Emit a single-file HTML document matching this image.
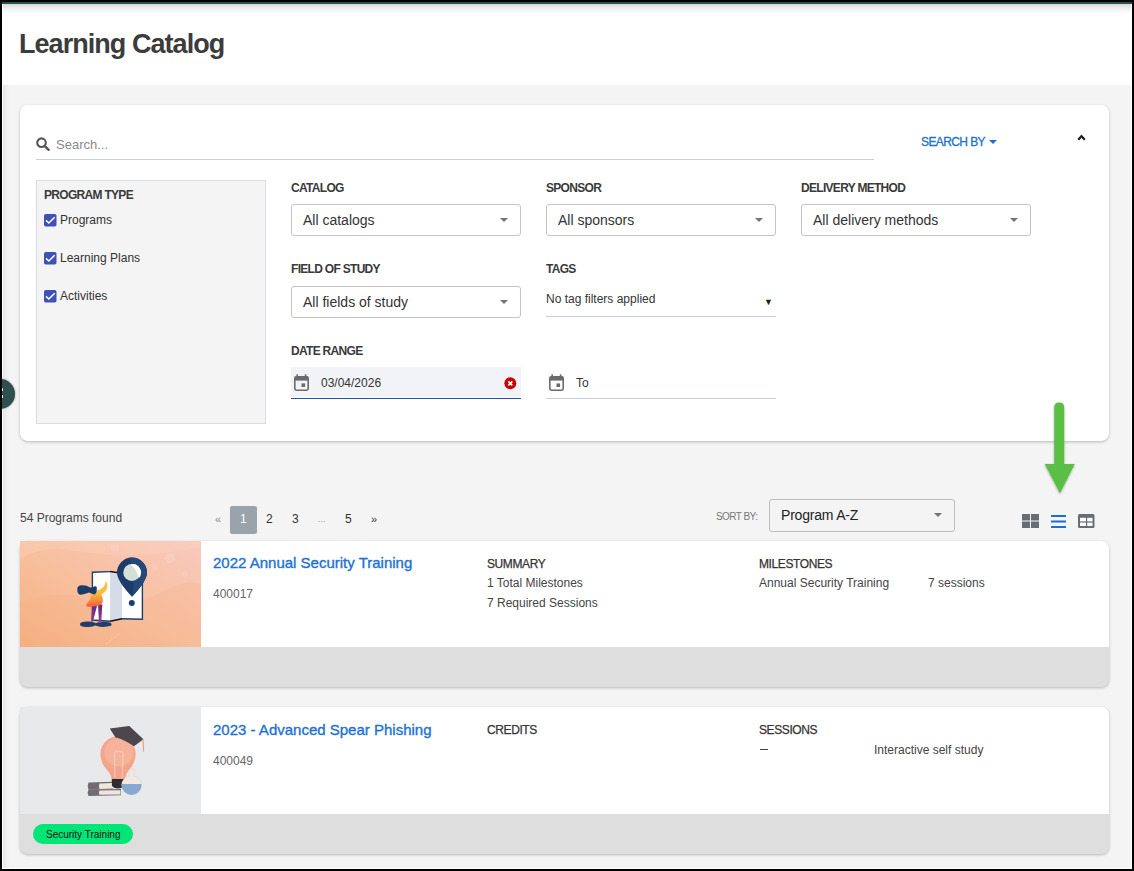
<!DOCTYPE html>
<html><head><meta charset="utf-8">
<style>
*{box-sizing:border-box;margin:0;padding:0}
html,body{width:1134px;height:871px;overflow:hidden;background:#000}
body{font-family:"Liberation Sans",sans-serif;color:#333;position:relative}
.a{position:absolute}
.frame{left:2px;top:2px;width:1130px;height:867px;background:#f4f4f4}
.topline{left:2px;top:2px;width:1130px;height:2px;background:#2a4f4f}
.header{left:2px;top:4px;width:1130px;height:81px;background:#fff}
.shade{left:2px;top:4px;width:1130px;height:10px;background:linear-gradient(#d8d8d8 0%,#ebebeb 35%,#f9f9f9 70%,rgba(255,255,255,0) 100%)}
.title{left:19px;top:29px;font-size:27px;font-weight:bold;color:#3c3c3c;white-space:nowrap;letter-spacing:-0.95px}
.card{background:#fff;border-radius:8px;box-shadow:0 1px 3px rgba(0,0,0,0.25)}
.lbl{font-size:12px;font-weight:bold;color:#3a3a3a;white-space:nowrap;letter-spacing:-0.7px}
.sel{height:32px;border:1px solid #c4c4c4;border-radius:3px;background:#fff;font-size:14px;color:#333;padding:7px 0 0 11px;white-space:nowrap}
.sel .caret{position:absolute;right:11.75px;top:13px;width:0;height:0;border-left:4.25px solid transparent;border-right:4.25px solid transparent;border-top:4.25px solid #757575}
.cb{width:12px;height:12px;background:#3f51b5;border-radius:2px}
.t{white-space:nowrap}
</style></head>
<body>
<div class="a frame"></div>
<div class="a header"></div>
<div class="a shade"></div>
<div class="a topline"></div>
<div class="a title">Learning Catalog</div>

<!-- filter panel -->
<div class="a card" style="left:20px;top:105px;width:1089px;height:336px"></div>

<!-- search -->
<svg class="a" style="left:36px;top:137px" width="14" height="15" viewBox="0 0 14 15"><circle cx="5.5" cy="5.7" r="4.3" fill="none" stroke="#555" stroke-width="2.1"/><path d="M8.6 8.8 L12.6 12.8" stroke="#555" stroke-width="2.4" stroke-linecap="round"/></svg>
<div class="a t" style="left:56px;top:137px;font-size:13px;color:#8a8a8a">Search...</div>
<div class="a" style="left:36px;top:159px;width:838px;height:1px;background:#c8cfd8"></div>
<div class="a t" style="left:921px;top:135px;font-size:12px;color:#1a73c8;letter-spacing:-0.6px;-webkit-text-stroke:0.3px #1a73c8">SEARCH BY</div>
<div class="a" style="left:988.5px;top:140px;width:0;height:0;border-left:4px solid transparent;border-right:4px solid transparent;border-top:4.5px solid #1a73c8"></div>
<svg class="a" style="left:1076px;top:133px" width="11" height="9" viewBox="0 0 11 9"><path d="M2.2 6.8 L5.5 3.3 L8.8 6.8" fill="none" stroke="#222" stroke-width="2.3"/></svg>

<!-- program type -->
<div class="a" style="left:36px;top:180px;width:230px;height:244px;background:#f4f4f4;border:1px solid #d8dce3"></div>
<div class="a lbl" style="left:44px;top:188px">PROGRAM TYPE</div>
<svg class="a" style="left:44px;top:214px" width="13" height="13" viewBox="0 0 13 13"><rect x="0" y="0" width="12.5" height="12.5" rx="1.8" fill="#3f51b5"/><path d="M2 6.4 L4.8 9 L10.7 3.2" fill="none" stroke="#fff" stroke-width="1.5"/></svg>
<div class="a t" style="left:60px;top:213px;font-size:12px;color:#333">Programs</div>
<svg class="a" style="left:44px;top:252px" width="13" height="13" viewBox="0 0 13 13"><rect x="0" y="0" width="12.5" height="12.5" rx="1.8" fill="#3f51b5"/><path d="M2 6.4 L4.8 9 L10.7 3.2" fill="none" stroke="#fff" stroke-width="1.5"/></svg>
<div class="a t" style="left:60px;top:251px;font-size:12px;color:#333">Learning Plans</div>
<svg class="a" style="left:44px;top:290px" width="13" height="13" viewBox="0 0 13 13"><rect x="0" y="0" width="12.5" height="12.5" rx="1.8" fill="#3f51b5"/><path d="M2 6.4 L4.8 9 L10.7 3.2" fill="none" stroke="#fff" stroke-width="1.5"/></svg>
<div class="a t" style="left:60px;top:289px;font-size:12px;color:#333">Activities</div>

<!-- selects -->
<div class="a lbl" style="left:291px;top:181px">CATALOG</div>
<div class="a sel" style="left:291px;top:204px;width:230px">All catalogs<span class="caret"></span></div>
<div class="a lbl" style="left:546px;top:181px">SPONSOR</div>
<div class="a sel" style="left:546px;top:204px;width:230px">All sponsors<span class="caret"></span></div>
<div class="a lbl" style="left:801px;top:181px">DELIVERY METHOD</div>
<div class="a sel" style="left:801px;top:204px;width:230px">All delivery methods<span class="caret"></span></div>

<div class="a lbl" style="left:291px;top:262px">FIELD OF STUDY</div>
<div class="a sel" style="left:291px;top:286px;width:230px">All fields of study<span class="caret"></span></div>
<div class="a lbl" style="left:546px;top:262px">TAGS</div>
<div class="a t" style="left:546px;top:292px;font-size:12px;color:#333">No tag filters applied</div>
<div class="a t" style="left:764px;top:297px;font-size:9px;color:#222">&#9660;</div>
<div class="a" style="left:546px;top:316px;width:230px;height:1px;background:#c8cfd8"></div>

<div class="a lbl" style="left:291px;top:344px">DATE RANGE</div>
<div class="a" style="left:291px;top:367px;width:230px;height:30px;background:#f1f3f7"></div><div class="a" style="left:291px;top:397.5px;width:230px;height:1.6px;background:#1f52a8"></div>
<svg class="a" style="left:293.5px;top:373.5px" width="15" height="17" viewBox="0 0 15 17"><rect x="0.8" y="2.8" width="13.4" height="13.4" rx="1.6" fill="none" stroke="#6b6b6b" stroke-width="1.6"/><rect x="0.8" y="2.8" width="13.4" height="3.8" fill="#6b6b6b"/><rect x="2.4" y="0.3" width="1.6" height="3" fill="#6b6b6b"/><rect x="10.8" y="0.3" width="1.6" height="3" fill="#6b6b6b"/><rect x="7.5" y="9.4" width="3.6" height="3.6" fill="#6b6b6b"/></svg>
<div class="a t" style="left:321px;top:376px;font-size:12px;color:#333">03/04/2026</div>
<svg class="a" style="left:504px;top:377px" width="13" height="13" viewBox="0 0 13 13"><circle cx="6.3" cy="6.3" r="5.95" fill="#cc0000"/><path d="M4.3 4.3 L8.3 8.3 M8.3 4.3 L4.3 8.3" stroke="#fff" stroke-width="1.7"/></svg>
<svg class="a" style="left:548.5px;top:373.5px" width="15" height="17" viewBox="0 0 15 17"><rect x="0.8" y="2.8" width="13.4" height="13.4" rx="1.6" fill="none" stroke="#6b6b6b" stroke-width="1.6"/><rect x="0.8" y="2.8" width="13.4" height="3.8" fill="#6b6b6b"/><rect x="2.4" y="0.3" width="1.6" height="3" fill="#6b6b6b"/><rect x="10.8" y="0.3" width="1.6" height="3" fill="#6b6b6b"/><rect x="7.5" y="9.4" width="3.6" height="3.6" fill="#6b6b6b"/></svg>
<div class="a t" style="left:576px;top:376px;font-size:12px;color:#333">To</div>
<div class="a" style="left:546px;top:398px;width:230px;height:1px;background:#c8cfd8"></div>

<!-- side bubble -->


<!-- results bar -->
<div class="a t" style="left:20px;top:511px;font-size:12px;color:#444">54 Programs found</div>
<div class="a t" style="left:215px;top:513px;font-size:11px;color:#888">&laquo;</div>
<div class="a" style="left:230px;top:506px;width:27px;height:28px;background:#9aa2ac;border-radius:2px"></div>
<div class="a t" style="left:240px;top:512px;font-size:12px;color:#fff">1</div>
<div class="a t" style="left:266px;top:512px;font-size:12px;color:#333">2</div>
<div class="a t" style="left:292px;top:512px;font-size:12px;color:#333">3</div>
<div class="a t" style="left:318px;top:514px;font-size:9px;color:#999">...</div>
<div class="a t" style="left:345px;top:512px;font-size:12px;color:#333">5</div>
<div class="a t" style="left:371px;top:513px;font-size:11px;color:#333">&raquo;</div>

<div class="a t" style="left:716px;top:511px;font-size:10px;color:#777;letter-spacing:-0.55px">SORT BY:</div>
<div class="a sel" style="left:769px;top:499px;width:186px;height:33px;background:#f4f4f4;border-color:#bdbdbd;padding-top:7px;color:#222;letter-spacing:-0.2px">Program A-Z<span class="caret" style="top:13px"></span></div>

<!-- view icons -->
<svg class="a" style="left:1021.5px;top:514px" width="17" height="14" viewBox="0 0 17 14"><rect x="0" y="0" width="8" height="6.5" fill="#666d75"/><rect x="9" y="0" width="8" height="6.5" fill="#666d75"/><rect x="0" y="7.5" width="8" height="6.5" fill="#666d75"/><rect x="9" y="7.5" width="8" height="6.5" fill="#666d75"/></svg>
<svg class="a" style="left:1050.5px;top:514.5px" width="15" height="13" viewBox="0 0 15 13"><rect x="0" y="0" width="15" height="2" fill="#1a6fd0"/><rect x="0" y="5.5" width="15" height="2" fill="#1a6fd0"/><rect x="0" y="11" width="15" height="2" fill="#1a6fd0"/></svg>
<svg class="a" style="left:1077.5px;top:514px" width="17" height="14" viewBox="0 0 17 14"><rect x="0" y="0" width="16.5" height="14" rx="1.5" fill="#666d75"/><rect x="2" y="3.8" width="6" height="3.6" fill="#fff"/><rect x="9.2" y="3.8" width="5.3" height="3.6" fill="#fff"/><rect x="2" y="8.6" width="6" height="3.4" fill="#fff"/><rect x="9.2" y="8.6" width="5.3" height="3.4" fill="#fff"/></svg>

<!-- green arrow -->
<svg class="a" style="left:1036px;top:396px" width="48" height="104" viewBox="0 0 48 104"><defs><filter id="sh" x="-50%" y="-20%" width="200%" height="140%"><feDropShadow dx="0" dy="1" stdDeviation="1.3" flood-color="#000" flood-opacity="0.35"/></filter></defs><g filter="url(#sh)"><path d="M18.2 11.5 Q18.2 6.5 23.2 6.5 Q28.2 6.5 28.2 11.5 L28.2 68 L38.7 68 L24 97.3 L8.7 68 L18.2 68 Z" fill="#5cbf45"/></g></svg>
<!-- card 1 -->
<div class="a card" style="left:20px;top:541px;width:1089px;height:146px;background:#dedede"></div>
<div class="a" style="left:201px;top:541px;width:908px;height:106px;background:#fff;border-top-right-radius:8px"></div>
<svg class="a" style="left:20px;top:541px" width="181" height="106" viewBox="0 0 181 106">
<defs>
<linearGradient id="bg1" x1="0" y1="1" x2="1" y2="0"><stop offset="0" stop-color="#f5b07f"/><stop offset="0.45" stop-color="#f8bf9c"/><stop offset="1" stop-color="#f9c9bf"/></linearGradient>
<linearGradient id="body1" x1="0" y1="0" x2="0" y2="1"><stop offset="0" stop-color="#fcc73c"/><stop offset="0.6" stop-color="#f58a3c"/><stop offset="1" stop-color="#ee5a42"/></linearGradient>
<linearGradient id="leg1" x1="0" y1="0" x2="0" y2="1"><stop offset="0" stop-color="#5d2a78"/><stop offset="1" stop-color="#9a3d8c"/></linearGradient>
</defs>
<rect width="181" height="106" fill="url(#bg1)"/>
<path d="M0 18 Q25 4 50 9 T110 14 T181 6 L181 0 L0 0Z" fill="#fbd3bd" opacity="0.35"/>
<path d="M0 62 Q30 48 70 58 T140 52 T181 44 L181 106 L0 106Z" fill="#f4ad83" opacity="0.22"/>
<circle cx="95" cy="6" r="4" fill="#fff" opacity="0.12"/><circle cx="150" cy="17" r="5" fill="#fff" opacity="0.12"/><circle cx="135" cy="26" r="3" fill="#fff" opacity="0.1"/><circle cx="165" cy="33" r="3" fill="#fff" opacity="0.1"/>
<path d="M85 104 L100 92" stroke="#fff" stroke-width="0.6" opacity="0.35"/>
<path d="M72.4 31.2 L90.1 30.6 L102 32.2 L122.4 32.2 L122.4 78.2 L102 77.8 L90.1 80.2 L72.4 79Z" fill="#fff"/>
<path d="M90.1 30.6 L102 32.2 L102 77.8 L90.1 80.2Z" fill="#d5dce8"/>
<path d="M90.1 80.2 L72.4 79 L72.4 31.2 L90.1 30.6" fill="none" stroke="#1d3f6e" stroke-width="1.4"/>
<path d="M102 32.2 L122.4 32.2 L122.4 78.2 L102 77.8" fill="none" stroke="#1d3f6e" stroke-width="1.4"/>
<path d="M90.1 30.6 L102 32.2 M90.1 80.2 L102 77.8" stroke="#111" stroke-width="1.5"/>
<path d="M97 31.5 A15 15 0 1 1 127 31.5 Q127 40 112 55.8 Q97 40 97 31.5Z" fill="#1b3b68"/>
<path d="M109 16.8 A15 15 0 0 1 127 31.5 Q127 40 112 55.8 Q113.5 50 113.5 45 L112 30 Q111 21 109 16.8Z" fill="#24487a"/>
<circle cx="111.8" cy="31.6" r="8.5" fill="#d3e0d5"/>
<path d="M110.7 23.15 A8.5 8.5 0 0 1 118.8 37.2 Q116.5 28 110.7 23.15Z" fill="#fff"/>
<circle cx="111.8" cy="62" r="3" fill="#1d3f6e"/>
<path d="M60 83.3 Q60 80.6 67 80.6 Q73 80.6 75 82 Q77 81.8 79 81 Q85 80.4 90 81.5 Q92.5 83 91 84.8 Q86 86.3 80 85.8 Q76.5 85 75 84.5 Q72 86 66 86 Q60 86 60 83.3Z" fill="#1d3f6e"/>
<path d="M72.5 65 L77 65 L73 80.5 L71 80.5Z M78 63.5 L82.3 63.5 L81.2 82 L79 82Z" fill="url(#leg1)"/>
<path d="M76 49.5 Q82.5 49 85 43.5 Q85.8 41 85.4 39.4 Q87.8 42 87.2 46.5 Q86 51.5 81 53.5Z" fill="#fbbd3a"/>
<path d="M71.5 52 Q77 48.5 80.5 52 Q83.3 56 82.7 61 Q82 64.5 77 65 Q70 66.5 66.4 65.2 Q65.6 63.5 68 61 Q70 59 71 57 Q70.5 54.5 71.5 52Z" fill="url(#body1)"/>
<path d="M57.3 48.7 Q56.8 44.4 62 44.2 Q67 44 69.5 46.2 Q72 47.3 74.5 45.3 Q77.2 44.6 76.8 48.2 Q77 52.6 74 53.6 Q71.5 52.8 69 51.6 Q64 53.9 60 53.7 Q57.2 52.8 57.3 48.7Z" fill="#1b3b68"/>
</svg>
<div class="a t" style="left:213px;top:554px;font-size:15px;color:#1b72d3;-webkit-text-stroke:0.35px #1b72d3">2022 Annual Security Training</div>
<div class="a t" style="left:213px;top:587px;font-size:12px;color:#666">400017</div>
<div class="a t" style="left:487px;top:557px;font-size:12px;color:#333;-webkit-text-stroke:0.25px #333;letter-spacing:-0.4px">SUMMARY</div>
<div class="a t" style="left:487px;top:576px;font-size:12px;color:#444">1 Total Milestones</div>
<div class="a t" style="left:487px;top:596px;font-size:12px;color:#444">7 Required Sessions</div>
<div class="a t" style="left:759px;top:557px;font-size:12px;color:#333;-webkit-text-stroke:0.25px #333;letter-spacing:-0.4px">MILESTONES</div>
<div class="a t" style="left:759px;top:576px;font-size:12px;color:#444">Annual Security Training</div>
<div class="a t" style="left:928px;top:576px;font-size:12px;color:#444">7 sessions</div>

<!-- card 2 -->
<div class="a card" style="left:20px;top:707px;width:1089px;height:147px;background:#dedede"></div>
<div class="a" style="left:201px;top:707px;width:908px;height:107px;background:#fff;border-top-right-radius:8px"></div>
<svg class="a" style="left:20px;top:707px" width="181" height="107" viewBox="0 0 181 107">
<rect width="181" height="107" fill="#e8e9eb"/>
<path d="M68.5 75.6 L93 74.8 L93 82.2 L68.5 82.8 Q66.8 79.2 68.5 75.6Z" fill="#716b73"/>
<path d="M79.5 76.6 L93 76 L93 81.6 L79.5 81.9 Q78.3 79.2 79.5 76.6Z" fill="#efe7dc"/>
<path d="M68.5 82.5 L101 82 L101 88.3 L68.5 88.9 Q66.8 85.7 68.5 82.5Z" fill="#716b73"/>
<path d="M79.5 83.5 L100.5 83.2 L100.5 87.4 L79.5 87.8 Q78.3 85.6 79.5 83.5Z" fill="#efe7dc"/>
<path d="M80.4 47 A17.6 17.6 0 1 1 115.6 47 Q115.6 56 109 63 Q105.5 67 105 72 L91.5 72 Q91 67 87 63 Q80.4 56 80.4 47Z" fill="#f4a48a"/>
<circle cx="99" cy="45" r="14.5" fill="#f7b5a0" opacity="0.8"/>
<path d="M94.8 70 L94.5 46 Q96 42.5 97.5 45 Q99 42.5 100.5 45 Q102 42.5 103 46 L102.2 70" fill="none" stroke="#fcd9cb" stroke-width="0.8"/>
<path d="M91.7 72 L104.5 72 L104 79 Q102 81.5 98 81.5 Q94 81.5 92 79Z" fill="#2e2c30"/>
<path d="M89.8 21.5 L109.3 19 L123.4 32.3 L114 39.2 Q105 33 95.3 30.2Z" fill="#4b474c"/>
<path d="M123 32 L123.6 44.5" stroke="#ee9a84" stroke-width="1.1"/>
<path d="M109.1 62.2 L114.2 62.2 L114.2 68.8 Q121.5 71.5 121.5 78 A9.9 9.9 0 0 1 101.7 78 Q101.7 71.5 109.1 68.8Z" fill="#efe9e2" stroke="#d8cfc6" stroke-width="0.5"/>
<path d="M101.9 77 L121.3 77 Q121.5 77.5 121.5 78 A9.9 9.9 0 0 1 101.7 78 Q101.7 77.5 101.9 77Z" fill="#87a8d0"/>
</svg>
<div class="a t" style="left:213px;top:721px;font-size:15px;color:#1b72d3;-webkit-text-stroke:0.35px #1b72d3">2023 - Advanced Spear Phishing</div>
<div class="a t" style="left:213px;top:754px;font-size:12px;color:#666">400049</div>
<div class="a t" style="left:487px;top:723px;font-size:12px;color:#333;-webkit-text-stroke:0.25px #333;letter-spacing:-0.4px">CREDITS</div>
<div class="a t" style="left:759px;top:723px;font-size:12px;color:#333;-webkit-text-stroke:0.25px #333;letter-spacing:-0.4px">SESSIONS</div>
<div class="a" style="left:759.5px;top:749px;width:8.5px;height:1.2px;background:#444"></div>
<div class="a t" style="left:874px;top:743px;font-size:12px;color:#444">Interactive self study</div>
<div class="a" style="left:33px;top:824px;width:100px;height:20px;border-radius:10px;background:#00e676"></div>
<div class="a t" style="left:46px;top:829px;font-size:10px;color:#111">Security Training</div>

<!-- frame edges -->
<div class="a" style="left:3px;top:85px;width:7px;height:784px;background:linear-gradient(90deg,rgba(0,0,0,0.05),rgba(0,0,0,0))"></div>
<div class="a" style="left:2px;top:4px;width:1px;height:865px;background:#fff"></div>
<div class="a" style="left:1131px;top:4px;width:1px;height:865px;background:#fff"></div>
<div class="a" style="left:2px;top:868px;width:1130px;height:1px;background:#fff"></div>
<div class="a" style="left:-15px;top:379px;width:30px;height:30px;border-radius:50%;background:#2f4f4e;box-shadow:0 0 2px rgba(0,0,0,0.5)"></div><div class="a" style="left:2px;top:388px;width:1.3px;height:2.6px;background:#fff;border-radius:1px"></div><div class="a" style="left:2px;top:395.3px;width:1.3px;height:2.6px;background:#fff;border-radius:1px"></div>
<div class="a" style="left:0;top:0;width:2px;height:871px;background:#000"></div>
<div class="a" style="left:0;top:0;width:1134px;height:2px;background:#000"></div>
<div class="a" style="left:0;top:869px;width:1134px;height:2px;background:#000"></div>
<div class="a" style="left:1132px;top:0;width:2px;height:871px;background:#000"></div>
</body></html>
